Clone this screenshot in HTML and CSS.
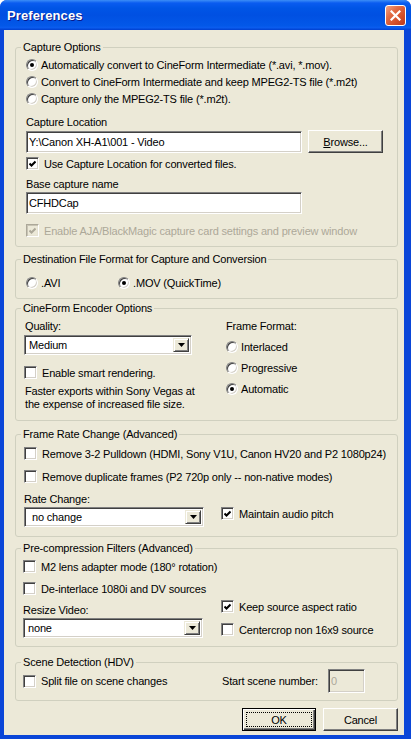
FILE: index.html
```html
<!DOCTYPE html>
<html>
<head>
<meta charset="utf-8">
<title>Preferences</title>
<link rel="stylesheet" href="styles.css">
</head>
<body>
<div class="window">
  <div class="titlebar">
    <span class="title">Preferences</span>
    <span class="close"><svg width="11" height="11" viewBox="0 0 11 11"><path d="M1.5 1.5 L9.5 9.5 M9.5 1.5 L1.5 9.5" stroke="#fff" stroke-width="2.2" stroke-linecap="square"/></svg></span>
  </div>
  <div class="client">

    <fieldset class="group g1">
      <legend>Capture Options</legend>
      <div class="body b1">
        <div class="line r17 rg first"><span class="radio on"></span>Automatically convert to CineForm Intermediate (*.avi, *.mov).</div>
        <div class="line r17 rg"><span class="radio"></span>Convert to CineForm Intermediate and keep MPEG2-TS file (*.m2t)</div>
        <div class="line r17 rg"><span class="radio"></span>Capture only the MPEG2-TS file (*.m2t).</div>
        <div class="lbl loc-lbl">Capture Location</div>
        <div class="pathrow">
          <div class="field wide">Y:\Canon XH-A1\001 - Video</div>
          <div class="btn browse"><u>B</u>rowse...</div>
        </div>
        <div class="line r15 cg use-loc"><span class="check"><svg width="7" height="7" viewBox="0 0 7 7"><path d="M0.5 3.5 L2.5 5.5 L6.5 1.5" fill="none" stroke="#000" stroke-width="2"/></svg></span>Use Capture Location for converted files.</div>
        <div class="lbl base-lbl">Base capture name</div>
        <div class="field wide base-field">CFHDCap</div>
        <div class="line r15 cg dim aja"><span class="check dis"><svg width="7" height="7" viewBox="0 0 7 7"><path d="M0.5 3.5 L2.5 5.5 L6.5 1.5" fill="none" stroke="#ACA899" stroke-width="2"/></svg></span>Enable AJA/BlackMagic capture card settings and preview window</div>
      </div>
    </fieldset>

    <fieldset class="group g2">
      <legend>Destination File Format for Capture and Conversion</legend>
      <div class="body b2">
        <div class="line r16">
          <span class="line rg avi"><span class="radio"></span>.AVI</span>
          <span class="line rg"><span class="radio on"></span>.MOV (QuickTime)</span>
        </div>
      </div>
    </fieldset>

    <fieldset class="group g3">
      <legend>CineForm Encoder Options</legend>
      <div class="body b3">
        <div class="col-enc">
          <div class="lbl head">Quality:</div>
          <div class="combo quality"><span class="val">Medium</span><span class="drop"><svg width="7" height="4" viewBox="0 0 7 4"><polygon points="0,0 7,0 3.5,4" fill="#000"/></svg></span></div>
          <div class="line r15 cg smart"><span class="check"></span>Enable smart rendering.</div>
          <div class="note">Faster exports within Sony Vegas at<br>the expense of increased file size.</div>
        </div>
        <div class="col-frame">
          <div class="lbl head">Frame Format:</div>
          <div class="line r17 rg ff1"><span class="radio"></span>Interlaced</div>
          <div class="line r17 rg ff"><span class="radio"></span>Progressive</div>
          <div class="line r17 rg ff"><span class="radio on"></span>Automatic</div>
        </div>
      </div>
    </fieldset>

    <fieldset class="group g4">
      <legend>Frame Rate Change (Advanced)</legend>
      <div class="body b4">
        <div class="line r15 cg pull"><span class="check"></span>Remove 3-2 Pulldown (HDMI, Sony V1U, Canon HV20 and P2 1080p24)</div>
        <div class="line r15 cg dup"><span class="check"></span>Remove duplicate frames (P2 720p only -- non-native modes)</div>
        <div class="split-end">
          <div class="col-left">
            <div class="lbl rate-lbl">Rate Change:</div>
            <div class="combo small"><span class="val spaced">no change</span><span class="drop"><svg width="7" height="4" viewBox="0 0 7 4"><polygon points="0,0 7,0 3.5,4" fill="#000"/></svg></span></div>
          </div>
          <div class="line r15 cg audio"><span class="check"><svg width="7" height="7" viewBox="0 0 7 7"><path d="M0.5 3.5 L2.5 5.5 L6.5 1.5" fill="none" stroke="#000" stroke-width="2"/></svg></span>Maintain audio pitch</div>
        </div>
      </div>
    </fieldset>

    <fieldset class="group g5">
      <legend>Pre-compression Filters (Advanced)</legend>
      <div class="body b5">
        <div class="line r15 cg m2"><span class="check"></span>M2 lens adapter mode (180° rotation)</div>
        <div class="line r15 cg deint"><span class="check"></span>De-interlace 1080i and DV sources</div>
        <div class="split-start">
          <div class="col-left2">
            <div class="lbl resize-lbl">Resize Video:</div>
            <div class="combo small"><span class="val">none</span><span class="drop"><svg width="7" height="4" viewBox="0 0 7 4"><polygon points="0,0 7,0 3.5,4" fill="#000"/></svg></span></div>
          </div>
          <div class="col-right2">
            <div class="line r15 cg"><span class="check"><svg width="7" height="7" viewBox="0 0 7 7"><path d="M0.5 3.5 L2.5 5.5 L6.5 1.5" fill="none" stroke="#000" stroke-width="2"/></svg></span>Keep source aspect ratio</div>
            <div class="line r15 cg crop"><span class="check"></span>Centercrop non 16x9 source</div>
          </div>
        </div>
      </div>
    </fieldset>

    <fieldset class="group g6">
      <legend>Scene Detection (HDV)</legend>
      <div class="body b6">
        <div class="line r15 cg split-col"><span class="check"></span>Split file on scene changes</div>
        <span class="scene-lbl">Start scene number:</span>
        <div class="field num dis">0</div>
      </div>
    </fieldset>

    <div class="actions">
      <div class="btn def ok">OK</div>
      <div class="btn cancel">Cancel</div>
    </div>

  </div>
</div>
</body>
</html>
```

FILE: styles.css
```css
* { box-sizing: border-box; }

body {
  margin: 0;
  font-family: "Liberation Sans", Arial, sans-serif;
  font-size: 11px;
  letter-spacing: -0.17px;
  color: #000;
}

.window {
  width: 411px;
  height: 739px;
  display: flex;
  flex-direction: column;
  background: #0A46D8;
  border-radius: 7px 7px 0 0;
  overflow: hidden;
}

.titlebar {
  flex: none;
  height: 30px;
  display: flex;
  align-items: center;
  padding: 0 5px 0 7px;
  background: linear-gradient(180deg, #3C8EF7 0, #0A5CF0 3px, #0055E6 8px, #0050E2 50%, #0358E8 85%, #0A5CEE 92%, #003FD0 100%);
}

.title {
  flex: 1;
  color: #fff;
  font-weight: bold;
  font-size: 13px;
  letter-spacing: 0.1px;
  text-shadow: 1px 1px #0A1A8A;
  padding-top: 1px;
}

.close {
  width: 21px;
  height: 21px;
  border: 1px solid #fff;
  border-radius: 3px;
  background: linear-gradient(135deg, #F2A486 0%, #E26C45 35%, #D24E28 70%, #BB3A1B 100%);
  display: flex;
  align-items: center;
  justify-content: center;
}

.client {
  flex: 1;
  margin: 0 7px 4px 4px;
  background: #ECE9D8;
  padding-left: 11px;
  display: flex;
  flex-direction: column;
}

/* group boxes */
.group {
  margin: 0;
  padding: 0;
  border: 1px solid #D0D0BF;
  border-radius: 3px;
  width: 383px;
  flex: none;
  min-width: 0;
}
.group legend {
  margin-left: 5px;
  padding: 0 2px;
  line-height: 14px;
}
.g1 { margin-top: 10px; height: 207px; }
.g2 { margin-top: 5px; height: 47px; }
.g3 { margin-top: 2px; height: 120px; }
.g4 { margin-top: 6px; height: 110px; }
.g5 { margin-top: 4px; height: 106px; }
.g6 { margin-top: 8px; height: 46px; }

/* generic rows */
.line { display: flex; align-items: center; white-space: nowrap; }
.r15 { height: 15px; }
.r16 { height: 16px; }
.r17 { height: 17px; }
.rg { gap: 3px; }
.cg { gap: 5px; }
.lbl { line-height: 14px; white-space: nowrap; }
.dim { color: #ACA899; }

/* widgets */
.radio {
  width: 12px;
  height: 12px;
  flex: none;
  border-radius: 50%;
  background: #fff;
  border: 1px solid;
  border-color: #808080 #fff #fff #808080;
  box-shadow: inset 1px 1px #404040, inset -1px -1px #D4D0C8;
  display: flex;
  align-items: center;
  justify-content: center;
}
.radio.on::after {
  content: "";
  width: 4px;
  height: 4px;
  border-radius: 50%;
  background: #000;
}

.check {
  width: 13px;
  height: 13px;
  flex: none;
  background: #fff;
  border: 1px solid;
  border-color: #808080 #fff #fff #808080;
  box-shadow: inset 1px 1px #404040, inset -1px -1px #D4D0C8;
  display: flex;
  align-items: center;
  justify-content: center;
}
.check svg { display: block; }
.check.dis {
  background: #ECE9D8;
  border-color: #ACA899 #fff #fff #ACA899;
  box-shadow: inset 1px 1px #C8C4B4, inset -1px -1px #E6E3D4;
}

.field {
  height: 22px;
  background: #fff;
  border: 1px solid;
  border-color: #808080 #fff #fff #808080;
  box-shadow: inset 1px 1px #404040, inset -1px -1px #D4D0C8;
  padding: 0 0 0 2px;
  display: flex;
  align-items: center;
  white-space: nowrap;
}
.field.wide { width: 276px; }
.field.dis { background: #ECE9D8; color: #ACA899; }

.combo {
  height: 20px;
  display: flex;
  background: #fff;
  border: 1px solid;
  border-color: #808080 #fff #fff #808080;
  box-shadow: inset 1px 1px #404040, inset -1px -1px #D4D0C8;
  padding: 2px;
}
.combo .val {
  flex: 1;
  display: flex;
  align-items: center;
  padding-left: 2px;
}
.combo .val.spaced { padding-left: 5px; }
.combo .drop {
  width: 16px;
  flex: none;
  background: #ECE9D8;
  border: 1px solid;
  border-color: #ECE9D8 #404040 #404040 #ECE9D8;
  box-shadow: inset 1px 1px #fff, inset -1px -1px #808080;
  display: flex;
  align-items: center;
  justify-content: center;
}
.combo .drop svg { display: block; }
.combo.quality { width: 168px; margin-top: 2px; }
.combo.small { width: 180px; margin-top: 1px; }

.btn {
  height: 23px;
  display: flex;
  align-items: center;
  justify-content: center;
  background: #ECE9D8;
  border: 1px solid;
  border-color: #fff #404040 #404040 #fff;
  box-shadow: inset -1px -1px #808080;
}
.btn.def {
  border-color: #000;
  box-shadow: inset 1px 1px #fff, inset -1px -1px #404040, inset -2px -2px #808080;
  outline: 1px dotted #000;
  outline-offset: -5px;
}

/* group 1 */
.b1 { padding: 2px 0 0 10px; }
.loc-lbl { margin-top: 8px; }
.pathrow { display: flex; align-items: flex-start; margin-top: 2px; }
.browse { width: 75px; margin: -1px 0 0 6px; }
.use-loc { margin-top: 3px; }
.base-lbl { margin-top: 6px; }
.base-field { margin-top: 1px; }
.aja { margin-top: 9px; }

/* group 2 */
.b2 { padding: 9px 0 0 10px; }
.avi { width: 92px; }

/* group 3 */
.b3 { display: flex; padding-left: 8px; }
.col-enc { width: 201px; flex: none; }
.col-frame { padding-left: 1px; }
.head { margin-top: 4px; padding-left: 1px; }
.col-frame .head { padding-left: 0; }
.smart { margin-top: 10px; }
.note { margin-top: 5px; line-height: 13px; white-space: nowrap; padding-left: 1px; }
.ff1 { margin-top: 5px; }
.ff { margin-top: 4px; }

/* group 4 */
.b4 { padding-left: 8px; }
.pull { margin-top: 5px; }
.dup { margin-top: 8px; }
.split-end { display: flex; align-items: flex-end; }
.col-left { width: 197px; flex: none; }
.rate-lbl { margin-top: 8px; }
.audio { margin-bottom: 6px; }

/* group 5 */
.b5 { padding-left: 7px; }
.m2 { margin-top: 4px; }
.deint { margin-top: 7px; }
.split-start { display: flex; align-items: flex-start; }
.col-left2 { width: 198px; flex: none; }
.resize-lbl { margin-top: 7px; }
.col-right2 { padding-top: 3px; }
.crop { margin-top: 8px; }

/* group 6 */
.b6 { display: flex; align-items: center; height: 24px; padding-left: 7px; }
.split-col { width: 198px; flex: none; }
.scene-lbl { width: 107px; flex: none; padding-left: 1px; white-space: nowrap; }
.field.num { width: 37px; height: 24px; }

/* dialog buttons */
.actions {
  display: flex;
  justify-content: flex-end;
  gap: 7px;
  margin-top: 7px;
  width: 383px;
}
.ok { width: 74px; }
.cancel { width: 75px; }
```
